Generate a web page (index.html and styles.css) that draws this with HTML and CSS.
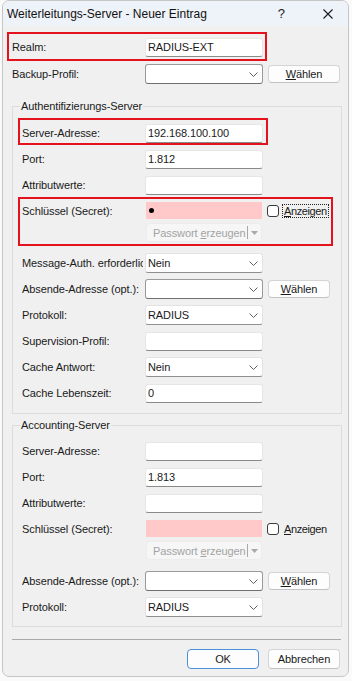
FILE: index.html
```html
<!DOCTYPE html>
<html lang="de">
<head>
  <meta http-equiv="Content-Type" content="text/html;charset=UTF-8">
  <meta name="viewport" content="width=device-width, initial-scale=1.0">
  <link rel="stylesheet" href="styles.css">
</head>
<body>
  <div class="dialog">
    <div class="titlebar">
      <span class="title">Weiterleitungs-Server - Neuer Eintrag</span>
      <span class="help">?</span>
      <svg class="close" width="10" height="10" viewBox="0 0 10 10">
        <path d="M0.5 0.5 L9.5 9.5 M9.5 0.5 L0.5 9.5" stroke="#1a1a1a" stroke-width="1.1" fill="none"/>
      </svg>
    </div>

    <div class="content">
      <div class="top">
        <div class="mark mark-realm">
          <div class="row">
            <span class="lbl">Realm:</span>
            <div class="edit">RADIUS-EXT</div>
          </div>
        </div>
        <div class="row">
          <span class="lbl">Backup-Profil:</span>
          <div class="combo combo-edit"><span></span><svg class="chev" width="9" height="5" viewBox="0 0 9 5"><polyline points="0.5,0.5 4.5,4.5 8.5,0.5" fill="none" stroke="#606060" stroke-width="1"/></svg></div>
          <div class="btn btn-wide"><u>W</u>ählen</div>
        </div>
      </div>

      <fieldset class="group group-auth">
        <legend>Authentifizierungs-Server</legend>
        <div class="rows">
          <div class="mark mark-server">
            <div class="row">
              <span class="lbl">Server-Adresse:</span>
              <div class="edit">192.168.100.100</div>
            </div>
          </div>
          <div class="row">
            <span class="lbl">Port:</span>
            <div class="edit">1.812</div>
          </div>
          <div class="row">
            <span class="lbl">Attributwerte:</span>
            <div class="edit"></div>
          </div>
          <div class="secret mark mark-secret">
            <div class="row row-secret">
              <span class="lbl">Schlüssel (Secret):</span>
              <div class="pink"><span class="dot"></span></div>
              <span class="check"></span>
              <span class="show focus"><u>A</u>nzeigen</span>
            </div>
            <div class="gen">
              <span class="gen-text">Passwort <u>e</u>rzeugen</span>
              <span class="gen-sep"></span>
              <svg class="gen-arrow" width="7" height="4" viewBox="0 0 7 4"><polygon points="0,0 7,0 3.5,4" fill="#a8a8a8"/></svg>
            </div>
          </div>
          <div class="row">
            <span class="lbl">Message-Auth. erforderlich</span>
            <div class="combo"><span>Nein</span><svg class="chev" width="9" height="5" viewBox="0 0 9 5"><polyline points="0.5,0.5 4.5,4.5 8.5,0.5" fill="none" stroke="#606060" stroke-width="1"/></svg></div>
          </div>
          <div class="row">
            <span class="lbl">Absende-Adresse (opt.):</span>
            <div class="combo combo-edit"><span></span><svg class="chev" width="9" height="5" viewBox="0 0 9 5"><polyline points="0.5,0.5 4.5,4.5 8.5,0.5" fill="none" stroke="#606060" stroke-width="1"/></svg></div>
            <div class="btn"><u>W</u>ählen</div>
          </div>
          <div class="row">
            <span class="lbl">Protokoll:</span>
            <div class="combo"><span>RADIUS</span><svg class="chev" width="9" height="5" viewBox="0 0 9 5"><polyline points="0.5,0.5 4.5,4.5 8.5,0.5" fill="none" stroke="#606060" stroke-width="1"/></svg></div>
          </div>
          <div class="row">
            <span class="lbl">Supervision-Profil:</span>
            <div class="edit"></div>
          </div>
          <div class="row">
            <span class="lbl">Cache Antwort:</span>
            <div class="combo"><span>Nein</span><svg class="chev" width="9" height="5" viewBox="0 0 9 5"><polyline points="0.5,0.5 4.5,4.5 8.5,0.5" fill="none" stroke="#606060" stroke-width="1"/></svg></div>
          </div>
          <div class="row">
            <span class="lbl">Cache Lebenszeit:</span>
            <div class="edit">0</div>
          </div>
        </div>
      </fieldset>

      <fieldset class="group group-acct">
        <legend>Accounting-Server</legend>
        <div class="rows">
          <div class="row">
            <span class="lbl">Server-Adresse:</span>
            <div class="edit"></div>
          </div>
          <div class="row">
            <span class="lbl">Port:</span>
            <div class="edit">1.813</div>
          </div>
          <div class="row">
            <span class="lbl">Attributwerte:</span>
            <div class="edit"></div>
          </div>
          <div class="secret">
            <div class="row row-secret">
              <span class="lbl">Schlüssel (Secret):</span>
              <div class="pink"></div>
              <span class="check"></span>
              <span class="show"><u>A</u>nzeigen</span>
            </div>
            <div class="gen">
              <span class="gen-text">Passwort <u>e</u>rzeugen</span>
              <span class="gen-sep"></span>
              <svg class="gen-arrow" width="7" height="4" viewBox="0 0 7 4"><polygon points="0,0 7,0 3.5,4" fill="#a8a8a8"/></svg>
            </div>
          </div>
          <div class="row">
            <span class="lbl">Absende-Adresse (opt.):</span>
            <div class="combo combo-edit"><span></span><svg class="chev" width="9" height="5" viewBox="0 0 9 5"><polyline points="0.5,0.5 4.5,4.5 8.5,0.5" fill="none" stroke="#606060" stroke-width="1"/></svg></div>
            <div class="btn"><u>W</u>ählen</div>
          </div>
          <div class="row">
            <span class="lbl">Protokoll:</span>
            <div class="combo"><span>RADIUS</span><svg class="chev" width="9" height="5" viewBox="0 0 9 5"><polyline points="0.5,0.5 4.5,4.5 8.5,0.5" fill="none" stroke="#606060" stroke-width="1"/></svg></div>
          </div>
        </div>
      </fieldset>

      <div class="separator"></div>

      <div class="actions">
        <div class="btn btn-wide btn-default">OK</div>
        <div class="btn btn-wide">Abbrechen</div>
      </div>
    </div>
  </div>
</body>
</html>
```

FILE: styles.css
```css
* {
  box-sizing: border-box;
}

html, body {
  margin: 0;
  padding: 0;
  background: #fafafa;
  font-family: "Liberation Sans", Arial, sans-serif;
  font-size: 11px;
  letter-spacing: -0.1px;
  color: #1a1a1a;
}

.dialog {
  width: 347px;
  height: 677px;
  margin-left: 2px;
  background: #f0f0f0;
  border: 1px solid #c6c6c6;
  border-radius: 7px;
  overflow: hidden;
}

.titlebar {
  height: 25px;
  display: flex;
  align-items: center;
  padding: 0 15px 0 4px;
  background: #eef2f9;
}

.title {
  font-size: 12px;
  letter-spacing: 0;
  color: #111;
}

.help {
  margin-left: auto;
  margin-right: 38px;
  font-size: 13px;
  color: #222;
}

.content {
  padding: 11px 6px 0 9px;
}

.top {
  display: flex;
  flex-direction: column;
  gap: 7px;
}

.row {
  display: flex;
  align-items: center;
  height: 20px;
}

.lbl {
  width: 121px;
  margin-right: 2px;
  white-space: nowrap;
  overflow: hidden;
}

.top .lbl {
  width: 131px;
}

/* red highlight frames */
.mark {
  border: 2px solid #e3121c;
}

.mark-realm {
  width: 260px;
  margin: -5px 0 -4px -5px;
  padding: 3px 0 2px 3px;
}

.mark-server {
  width: 250px;
  margin: -5px 0 -2px -4px;
  padding: 3px 0 0 2px;
}

.secret {
  height: 46px;
}

.mark-secret {
  width: 315px;
  height: 49px;
  margin: -4px 0 1px -4px;
  padding: 2px 0 2px 2px;
}

.edit {
  width: 118px;
  height: 19px;
  padding-left: 2px;
  line-height: 17px;
  background: #fff;
  border: 1px solid #e6e6e6;
  border-bottom-color: #8a8a8a;
  border-radius: 3px;
  white-space: nowrap;
}

.combo {
  width: 118px;
  height: 20px;
  display: flex;
  align-items: center;
  padding: 0 4px 0 2px;
  background: #fff;
  border: 1px solid #e3e3e3;
  border-bottom-color: #8f8f8f;
  border-radius: 3px;
}

.combo-edit {
  border-color: #9a9a9a;
  border-bottom-color: #6f6f6f;
}

.chev {
  margin-left: auto;
}

.btn {
  width: 62px;
  height: 18px;
  margin-left: 5px;
  display: flex;
  align-items: center;
  justify-content: center;
  background: #fdfdfd;
  border: 1px solid #d4d4d4;
  border-bottom-color: #c2c2c2;
  border-radius: 4px;
}

.btn-wide {
  width: 72px;
}

.row-secret {
  height: 19px;
}

.pink {
  width: 116px;
  height: 17px;
  margin-left: 1px;
  margin-right: 1px;
  display: flex;
  align-items: center;
  padding-left: 3px;
  background: #ffc9c9;
}

.dot {
  width: 5px;
  height: 5px;
  border-radius: 50%;
  background: #000;
}

.check {
  width: 12px;
  height: 12px;
  margin-left: 4px;
  background: #fff;
  border: 1px solid #3a3a3a;
  border-radius: 3px;
}

.show {
  margin-left: 3px;
  padding: 0 1px;
  line-height: 12px;
  letter-spacing: -0.4px;
  border: 1px solid transparent;
}

.show.focus {
  border: 1px dotted #222;
}

.gen {
  width: 116px;
  height: 19px;
  margin: 3px 0 0 124px;
  display: flex;
  align-items: center;
  padding-left: 6px;
  background: #f6f6f6;
  border: 1px solid #ececec;
  border-radius: 4px;
  color: #a3a3a3;
}

.gen-sep {
  width: 1px;
  height: 13px;
  margin-left: auto;
  background: #a8a8a8;
}

.gen-arrow {
  margin: 0 3px 0 3px;
}

.group {
  margin: 15px 0 0;
  padding: 10px 0 10px 9px;
  border: 1px solid #dcdcdc;
  min-width: 0;
}

.group legend {
  margin-left: -2px;
  padding: 0 1px;
  line-height: 14px;
}

.group-acct {
  margin-top: 4px;
  padding: 9px 0 9px 9px;
}

.rows {
  display: flex;
  flex-direction: column;
  gap: 6px;
}

.separator {
  height: 1px;
  margin: 12px 1px 0 0;
  background: #a9a9a9;
}

.actions {
  display: flex;
  justify-content: flex-end;
  gap: 9px;
  margin-top: 9px;
  padding-right: 2px;
}

.actions .btn {
  height: 20px;
  margin-left: 0;
}

.btn-default {
  border-color: #4a8fd8;
}
```
